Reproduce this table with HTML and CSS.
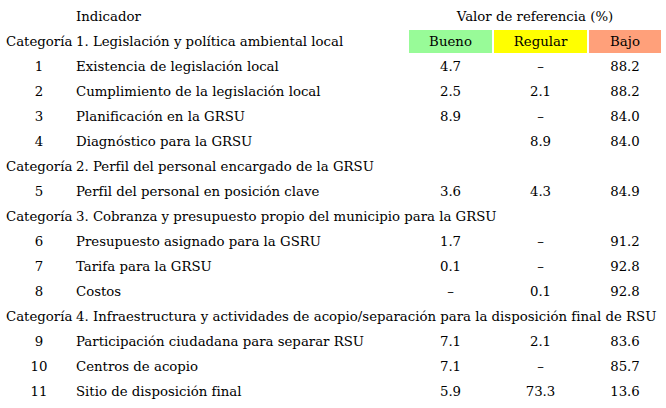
FILE: index.html
```html
<!DOCTYPE html>
<html lang="es">
<head>
<meta charset="utf-8">
<title>Indicadores GRSU</title>
<link rel="stylesheet" href="styles.css">
</head>
<body>
<table class="ref">
  <colgroup>
    <col class="c-num">
    <col class="c-ind">
    <col class="c-bueno">
    <col class="c-regular">
    <col class="c-bajo">
  </colgroup>
  <thead>
    <tr>
      <th></th>
      <th class="left">Indicador</th>
      <th colspan="3">Valor de referencia (%)</th>
    </tr>
  </thead>
  <tbody>
    <tr>
      <td class="cat">Categoría</td>
      <td class="left">1. Legislación y política ambiental local</td>
      <td class="bueno">Bueno</td>
      <td class="regular">Regular</td>
      <td class="bajo">Bajo</td>
    </tr>
    <tr><td>1</td><td class="left">Existencia de legislación local</td><td>4.7</td><td>–</td><td>88.2</td></tr>
    <tr><td>2</td><td class="left">Cumplimiento de la legislación local</td><td>2.5</td><td>2.1</td><td>88.2</td></tr>
    <tr><td>3</td><td class="left">Planificación en la GRSU</td><td>8.9</td><td>–</td><td>84.0</td></tr>
    <tr><td>4</td><td class="left">Diagnóstico para la GRSU</td><td></td><td>8.9</td><td>84.0</td></tr>
    <tr><td class="cat">Categoría</td><td class="left" colspan="4">2. Perfil del personal encargado de la GRSU</td></tr>
    <tr><td>5</td><td class="left">Perfil del personal en posición clave</td><td>3.6</td><td>4.3</td><td>84.9</td></tr>
    <tr><td class="cat">Categoría</td><td class="left" colspan="4">3. Cobranza y presupuesto propio del municipio para la GRSU</td></tr>
    <tr><td>6</td><td class="left">Presupuesto asignado para la GSRU</td><td>1.7</td><td>–</td><td>91.2</td></tr>
    <tr><td>7</td><td class="left">Tarifa para la GRSU</td><td>0.1</td><td>–</td><td>92.8</td></tr>
    <tr><td>8</td><td class="left">Costos</td><td>–</td><td>0.1</td><td>92.8</td></tr>
    <tr><td class="cat">Categoría</td><td class="left" colspan="4">4. Infraestructura y actividades de acopio/separación para la disposición final de RSU</td></tr>
    <tr><td>9</td><td class="left">Participación ciudadana para separar RSU</td><td>7.1</td><td>2.1</td><td>83.6</td></tr>
    <tr><td>10</td><td class="left">Centros de acopio</td><td>7.1</td><td>–</td><td>85.7</td></tr>
    <tr><td>11</td><td class="left">Sitio de disposición final</td><td>5.9</td><td>73.3</td><td>13.6</td></tr>
  </tbody>
</table>
</body>
</html>
```

FILE: styles.css
```css
html, body {
  margin: 0;
  padding: 0;
  background: #ffffff;
}

body {
  padding: 3px 0 0 3px;
  font-family: "DejaVu Serif", serif;
  font-size: 13.3px;
  color: #000000;
}

.ref {
  border-collapse: separate;
  border-spacing: 2px;
  table-layout: fixed;
  width: 660px;
  margin: 0;
}

.c-num { width: 68px; }
.c-ind { width: 332px; }
.c-bueno { width: 83px; }
.c-regular { width: 93px; }
.c-bajo { width: 72px; }

.ref th,
.ref td {
  height: 23px;
  padding: 0 1px;
  font-weight: normal;
  text-align: center;
  vertical-align: middle;
  white-space: nowrap;
  overflow: visible;
}

.ref .left,
.ref .cat {
  text-align: left;
}

.bueno { background: #98fb98; }
.regular { background: #ffff00; }
.bajo { background: #ffa07a; }
```
